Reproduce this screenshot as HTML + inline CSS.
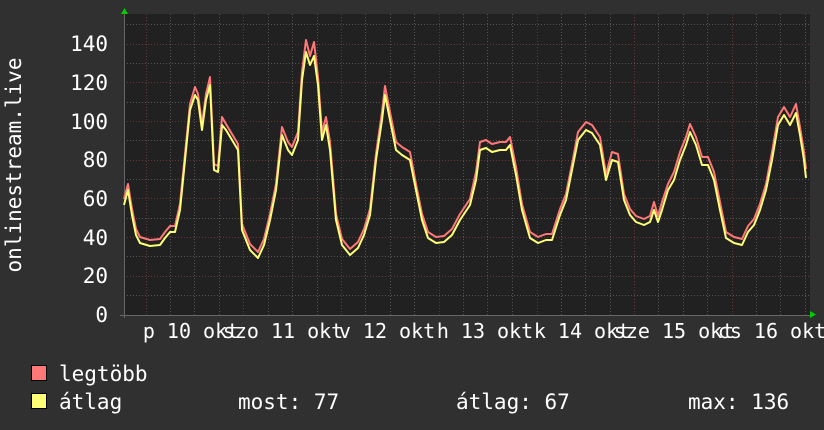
<!DOCTYPE html>
<html><head><meta charset="utf-8"><style>
html,body{margin:0;padding:0;background:#303030;}
svg{display:block}
</style></head><body>
<svg width="824" height="430" xmlns="http://www.w3.org/2000/svg">
<rect width="824" height="430" fill="#303030"/>
<rect x="124" y="14" width="686" height="301" fill="#212121"/>
<g stroke="#555" stroke-width="1" stroke-dasharray="1,2">
<line x1="124" x2="810" y1="295.5" y2="295.5"/><line x1="124" x2="810" y1="256.5" y2="256.5"/><line x1="124" x2="810" y1="218.5" y2="218.5"/><line x1="124" x2="810" y1="179.5" y2="179.5"/><line x1="124" x2="810" y1="140.5" y2="140.5"/><line x1="124" x2="810" y1="102.5" y2="102.5"/><line x1="124" x2="810" y1="63.5" y2="63.5"/><line x1="124" x2="810" y1="24.5" y2="24.5"/>
<line x1="170.5" x2="170.5" y1="14" y2="315"/><line x1="194.5" x2="194.5" y1="14" y2="315"/><line x1="219.5" x2="219.5" y1="14" y2="315"/>
<line x1="268.5" x2="268.5" y1="14" y2="315"/><line x1="292.5" x2="292.5" y1="14" y2="315"/><line x1="317.5" x2="317.5" y1="14" y2="315"/>
<line x1="365.5" x2="365.5" y1="14" y2="315"/><line x1="390.5" x2="390.5" y1="14" y2="315"/><line x1="414.5" x2="414.5" y1="14" y2="315"/>
<line x1="463.5" x2="463.5" y1="14" y2="315"/><line x1="487.5" x2="487.5" y1="14" y2="315"/><line x1="512.5" x2="512.5" y1="14" y2="315"/>
<line x1="561.5" x2="561.5" y1="14" y2="315"/><line x1="585.5" x2="585.5" y1="14" y2="315"/><line x1="610.5" x2="610.5" y1="14" y2="315"/>
<line x1="658.5" x2="658.5" y1="14" y2="315"/><line x1="683.5" x2="683.5" y1="14" y2="315"/><line x1="707.5" x2="707.5" y1="14" y2="315"/>
<line x1="756.5" x2="756.5" y1="14" y2="315"/><line x1="780.5" x2="780.5" y1="14" y2="315"/><line x1="805.5" x2="805.5" y1="14" y2="315"/>
</g>
<g stroke="#6a3535" stroke-width="1" stroke-dasharray="1,2">
<line x1="124" x2="810" y1="276.5" y2="276.5"/><line x1="124" x2="810" y1="237.5" y2="237.5"/><line x1="124" x2="810" y1="198.5" y2="198.5"/><line x1="124" x2="810" y1="160.5" y2="160.5"/><line x1="124" x2="810" y1="121.5" y2="121.5"/><line x1="124" x2="810" y1="82.5" y2="82.5"/><line x1="124" x2="810" y1="44.5" y2="44.5"/>
<line x1="146.5" x2="146.5" y1="14" y2="315"/><line x1="243.5" x2="243.5" y1="14" y2="315"/><line x1="341.5" x2="341.5" y1="14" y2="315"/><line x1="439.5" x2="439.5" y1="14" y2="315"/><line x1="537.5" x2="537.5" y1="14" y2="315"/><line x1="634.5" x2="634.5" y1="14" y2="315"/><line x1="732.5" x2="732.5" y1="14" y2="315"/>
</g>
<line x1="120" x2="812" y1="315.5" y2="315.5" stroke="#666"/>
<line x1="124.5" x2="124.5" y1="12" y2="318" stroke="#666"/>
<polygon points="121,14 124.5,8 128,14" fill="#0c0"/>
<polygon points="810,311 816,314.5 810,318" fill="#0c0"/>
<g fill="none" stroke-width="2" stroke-linejoin="round">
<polyline stroke="#ff7777" transform="translate(0,-4)" points="124,203 128,188 132,213 136,233 140,241 150,244 160,243 165,236 170,230 175,230 180,208 185,158 190,108 195,91 198,98 202,128 206,98 210,81 214,168 218,170 222,121 226,128 232,138 238,148 242,228 250,248 258,256 264,243 270,218 276,188 282,131 288,146 292,151 298,136 302,76 306,44 310,60 314,46 318,81 322,136 326,121 330,146 336,218 342,243 350,253 358,246 364,233 370,213 376,158 382,116 385,90 390,116 396,146 402,151 410,156 416,188 422,218 428,236 436,241 444,240 452,233 460,218 470,203 476,176 480,146 486,144 492,148 500,146 506,146 510,141 516,171 522,208 530,236 538,241 546,238 552,238 560,213 566,198 572,168 578,136 586,126 592,129 600,141 606,178 612,156 618,158 624,198 630,213 636,220 644,223 650,220 654,206 658,220 662,206 668,188 674,176 680,156 686,141 690,128 696,141 702,161 708,161 714,176 720,206 726,236 734,241 742,243 748,230 754,223 760,208 766,188 772,156 778,121 784,111 790,121 796,108 800,131 804,156 806,173"/>
<polyline stroke="#ffff77" points="124,205 128,190 132,215 136,235 140,243 150,246 160,245 165,238 170,232 175,232 180,210 185,160 190,110 195,95 198,100 202,130 206,100 210,85 214,170 218,172 222,125 226,130 232,140 238,150 242,230 250,250 258,258 264,245 270,220 276,190 282,135 288,150 292,155 298,140 302,80 306,52 310,65 314,56 318,85 322,140 326,125 330,150 336,220 342,245 350,255 358,248 364,235 370,215 376,160 382,120 385,95 390,120 396,150 402,155 410,160 416,190 422,220 428,238 436,243 444,242 452,235 460,220 470,205 476,180 480,150 486,148 492,152 500,150 506,150 510,145 516,175 522,210 530,238 538,243 546,240 552,240 560,215 566,200 572,170 578,140 586,130 592,133 600,145 606,180 612,160 618,162 624,200 630,215 636,222 644,225 650,222 654,210 658,222 662,210 668,190 674,180 680,160 686,145 690,132 696,145 702,165 708,165 714,180 720,210 726,238 734,243 742,245 748,232 754,225 760,210 766,190 772,160 778,125 784,115 790,125 796,113 800,135 804,160 806,178"/>
</g>
<g fill="#fff" font-family="'DejaVu Sans Mono','Liberation Mono',monospace" font-size="21" text-anchor="end">
<text x="108" y="322">0</text><text x="108" y="283">20</text><text x="108" y="245">40</text><text x="108" y="206">60</text><text x="108" y="167">80</text><text x="108" y="129">100</text><text x="108" y="90">120</text><text x="108" y="51">140</text>
</g>
<text transform="translate(21,165) rotate(-90)" fill="#fff" font-family="'DejaVu Sans Mono','Liberation Mono',monospace" font-size="21" text-anchor="middle">onlinestream.live</text>
<g fill="#fff" font-family="'DejaVu Sans Mono','Liberation Mono',monospace" font-size="20" text-anchor="middle">
<text x="191" y="338">p 10 okt</text><text x="283" y="338">szo 11 okt</text><text x="387" y="338">v 12 okt</text><text x="485" y="338">h 13 okt</text><text x="582" y="338">k 14 okt</text><text x="674" y="338">sze 15 okt</text><text x="772" y="338">cs 16 okt</text>
</g>
<rect x="31.5" y="365.5" width="15" height="15" fill="#ff7777" stroke="#000"/>
<rect x="31.5" y="393.5" width="15" height="15" fill="#ffff77" stroke="#000"/>
<g fill="#fff" font-family="'DejaVu Sans Mono','Liberation Mono',monospace" font-size="21">
<text x="59" y="381">legtöbb</text>
<text x="59" y="409">átlag</text>
<text x="238" y="409">most: 77</text>
<text x="456" y="409">átlag: 67</text>
<text x="688" y="409">max: 136</text>
</g>
</svg>
</body></html>
